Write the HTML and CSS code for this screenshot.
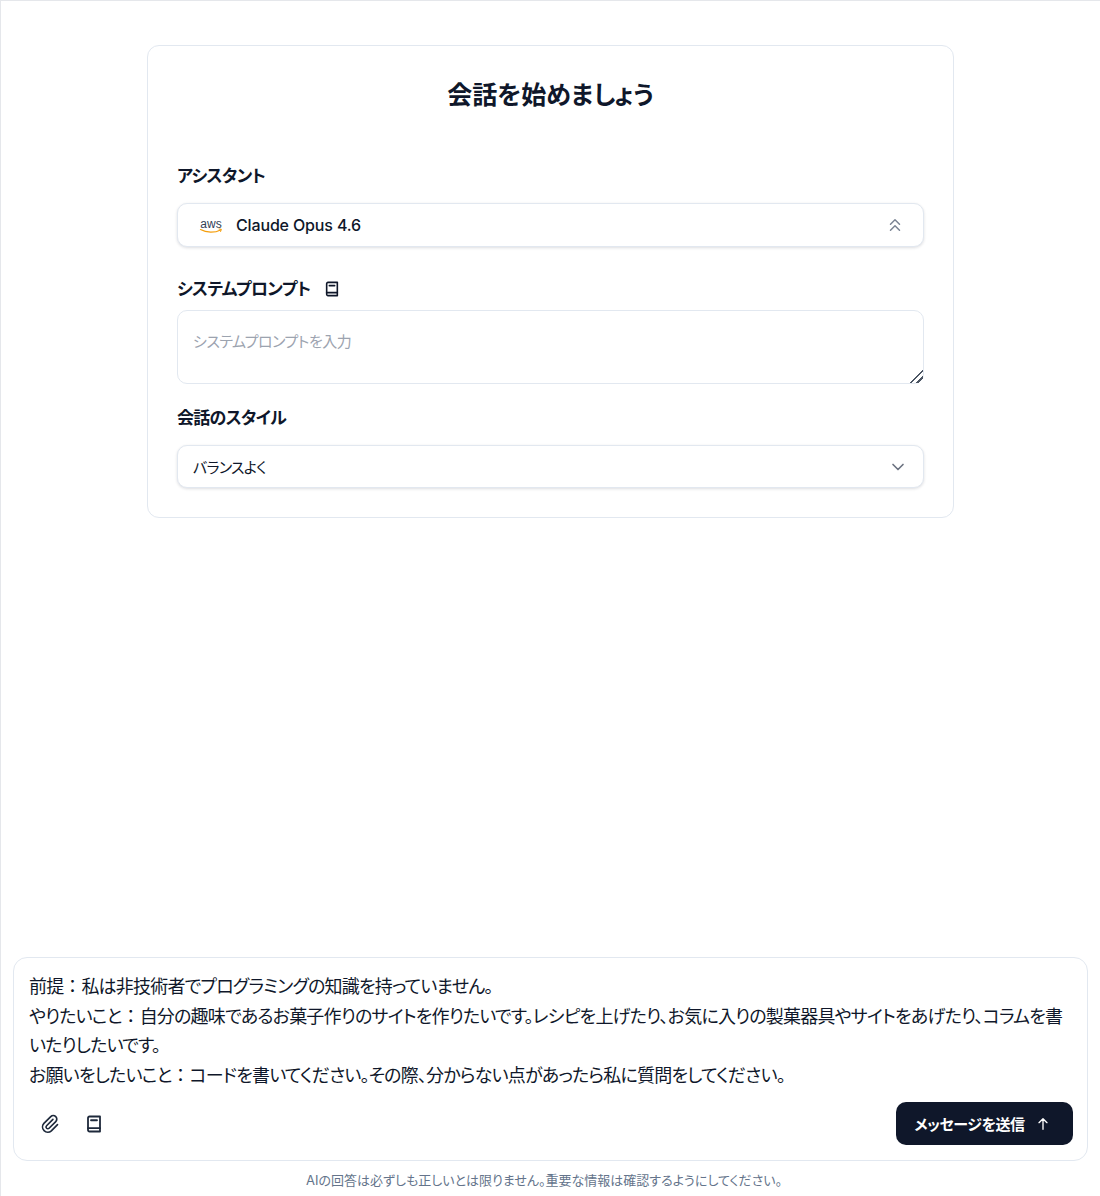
FILE: index.html
```html
<!DOCTYPE html>
<html lang="ja">
<head>
    <meta charset="UTF-8">
    <meta name="viewport" content="width=device-width, initial-scale=1.0">
    <title>会話を始めましょう</title>
    <link rel="stylesheet" href="styles.css">
</head>
<body>
    <div class="page">
        <main class="main-content">
            <section class="setup-card">
                <h1 class="setup-title">会話を始めましょう</h1>

                <div class="field field-assistant">
                    <div class="field-label">アシスタント</div>
                    <div class="select-box select-model">
                        <svg class="aws-logo" viewBox="0 0 24 18" width="24" height="18" aria-hidden="true">
                            <text x="12" y="12" text-anchor="middle" class="aws-text">aws</text>
                            <path d="M1.5 13.6c6 3.4 14.5 3.4 20 .3" fill="none" stroke="#f59e0b" stroke-width="1.2" stroke-linecap="round"/>
                            <path d="M20 13l2.4.3-.8 2.2" fill="none" stroke="#f59e0b" stroke-width="1" stroke-linecap="round"/>
                        </svg>
                        <span class="model-name">Claude Opus 4.6</span>
                        <svg class="select-icon icon-double" viewBox="0 0 24 24" width="18" height="18" aria-hidden="true">
                            <path d="M6 11l6-6 6 6M6 19l6-6 6 6"/>
                        </svg>
                    </div>
                </div>

                <div class="field field-prompt">
                    <div class="field-label">
                        システムプロンプト
                        <svg class="book-icon" viewBox="0 0 24 24" width="16" height="16" aria-hidden="true">
                            <path d="M4 20V4a2 2 0 0 1 2-2h14v20H6a2 2 0 0 1-2-2z"/>
                            <path d="M4 17.5h16M8 7h8"/>
                        </svg>
                    </div>
                    <textarea class="prompt-input" placeholder="システムプロンプトを入力"></textarea>
                </div>

                <div class="field field-style">
                    <div class="field-label">会話のスタイル</div>
                    <div class="select-box select-style">
                        <span class="style-name">バランスよく</span>
                        <svg class="select-icon icon-single" viewBox="0 0 24 24" width="20" height="20" aria-hidden="true">
                            <path d="M6 9l6 6 6-6"/>
                        </svg>
                    </div>
                </div>
            </section>
        </main>

        <footer class="composer-area">
            <div class="composer">
                <div class="composer-text">
                    前提<span class="full-width">：</span>私は非技術者でプログラミングの知識を持っていません。<br>
                    やりたいこと<span class="full-width">：</span>自分の趣味であるお菓子作りのサイトを作りたいです。レシピを上げたり、お気に入りの製菓器具やサイトをあげたり、コラムを書いたりしたいです。<br>
                    お願いをしたいこと<span class="full-width">：</span>コードを書いてください。その際、分からない点があったら私に質問をしてください。
                </div>
                <div class="composer-actions">
                    <div class="composer-tools">
                        <svg class="tool-icon" viewBox="0 0 24 24" width="20" height="20" aria-hidden="true">
                            <path d="M15.5 6.5l-7.6 7.6a2.1 2.1 0 0 0 3 3l8-8a4.2 4.2 0 0 0-6-6l-8.2 8.2a6.3 6.3 0 0 0 8.9 8.9l7.4-7.4"/>
                        </svg>
                        <svg class="tool-icon tool-book" viewBox="0 0 24 24" width="18" height="18" aria-hidden="true">
                            <path d="M4 20V4a2 2 0 0 1 2-2h14v20H6a2 2 0 0 1-2-2z"/>
                            <path d="M4 17.5h16M8 7h8"/>
                        </svg>
                    </div>
                    <button class="send-button">
                        メッセージを送信
                        <svg viewBox="0 0 24 24" width="16" height="16" aria-hidden="true">
                            <path d="M12 20V4M6 10l6-6 6 6"/>
                        </svg>
                    </button>
                </div>
            </div>
            <p class="disclaimer">AIの回答は必ずしも正しいとは限りません。重要な情報は確認するようにしてください。</p>
        </footer>
    </div>
</body>
</html>
```

FILE: styles.css
```css
* {
    box-sizing: border-box;
}

body {
    margin: 0;
    font-family: "Inter", "Noto Sans CJK JP", sans-serif;
    font-feature-settings: "palt";
    color: #0f172a;
    background-color: #fff;
}

.page {
    height: 1196px;
    display: flex;
    flex-direction: column;
    border-top: 1px solid #e5e7eb;
    border-left: 1px solid #e5e7eb;
    overflow: hidden;
}

.main-content {
    flex-grow: 1;
    padding-top: 44px;
}

.setup-card {
    width: 807px;
    height: 473px;
    margin-left: 146px;
    padding: 30px 29px;
    border: 1px solid #e2e8f0;
    border-radius: 12px;
}

.setup-title {
    margin: 0;
    font-size: 25px;
    line-height: 38px;
    font-weight: 600;
    text-align: center;
}

.field-label {
    display: flex;
    align-items: center;
    gap: 14px;
    font-size: 17px;
    letter-spacing: -0.7px;
    line-height: 24px;
    font-weight: 600;
}

.field-assistant {
    margin-top: 50px;
}

.field-prompt {
    margin-top: 30px;
}

.field-style {
    margin-top: 22px;
}

.select-box {
    display: flex;
    align-items: center;
    width: 747px;
    height: 44px;
    margin-top: 15px;
    border: 1px solid #e2e8f0;
    border-radius: 10px;
    box-shadow: 0 1px 3px rgba(15, 23, 42, 0.14);
    background-color: #fff;
}

.select-model {
    padding: 0 19px 0 21px;
}

.select-style {
    height: 43px;
    padding: 0 15px;
}

.aws-logo {
    flex-shrink: 0;
}

.aws-text {
    font-family: "Liberation Sans", sans-serif;
    font-size: 12px;
    fill: #334155;
}

.model-name {
    margin-left: 13px;
    font-size: 16px;
    letter-spacing: -0.15px;
    font-weight: 500;
    flex-grow: 1;
}

.style-name {
    flex-grow: 1;
    font-size: 15px;
    letter-spacing: -0.7px;
}

.select-icon path, .book-icon path, .tool-icon path, .send-button path {
    fill: none;
    stroke: currentColor;
    stroke-width: 2;
    stroke-linecap: round;
    stroke-linejoin: round;
}

.book-icon path, .tool-book path {
    stroke-width: 2.4;
}

.select-icon {
    color: #6b7280;
}

.icon-double {
    color: #7b8494;
}

.prompt-input {
    display: block;
    width: 747px;
    height: 74px;
    margin-top: 9px;
    padding: 19px 15px 0;
    border: 1px solid #e2e8f0;
    border-radius: 10px;
    font-family: inherit;
    font-feature-settings: inherit;
    font-size: 15px;
    letter-spacing: -0.5px;
    color: #0f172a;
    outline: none;
}

.prompt-input::placeholder {
    color: #9ca3af;
}

.prompt-input::-webkit-resizer {
    background: linear-gradient(135deg, transparent 54%, #4b5563 54%, #4b5563 62%, transparent 62%, transparent 76%, #4b5563 76%, #4b5563 84%, transparent 84%);
}

.composer-area {
    padding: 0 12px;
}

.composer {
    width: 1075px;
    height: 204px;
    padding: 14px 15px 15px;
    display: flex;
    flex-direction: column;
    justify-content: space-between;
    border: 1px solid #e2e8f0;
    border-radius: 14px;
}

.composer-text {
    font-size: 18px;
    letter-spacing: -0.8px;
    line-height: 29.5px;
}

.full-width {
    font-feature-settings: normal;
    letter-spacing: 0;
}

.composer-actions {
    display: flex;
    align-items: center;
    justify-content: space-between;
}

.composer-tools {
    display: flex;
    align-items: center;
    gap: 25px;
    padding-left: 11px;
    color: #1e293b;
}

.send-button {
    display: flex;
    align-items: center;
    justify-content: center;
    gap: 10px;
    width: 177px;
    height: 43px;
    margin-right: -1px;
    padding: 0 4px 0 0;
    border: none;
    border-radius: 10px;
    background-color: #0f172a;
    color: #fff;
    font-family: inherit;
    font-feature-settings: inherit;
    font-size: 15px;
    letter-spacing: -0.4px;
    font-weight: 600;
}

.disclaimer {
    margin: 10px 0 7px;
    padding-right: 13px;
    text-align: center;
    font-size: 13px;
    line-height: 18px;
    color: #64748b;
}
```
